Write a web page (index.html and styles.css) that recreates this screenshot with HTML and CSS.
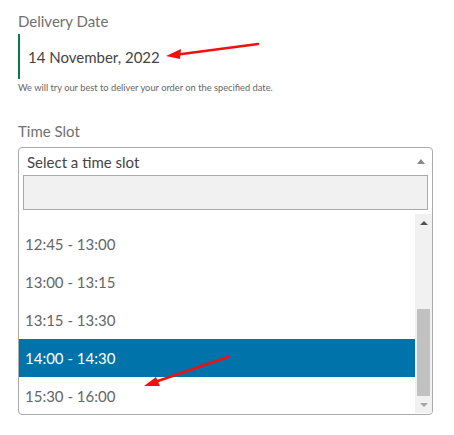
FILE: index.html
```html
<!DOCTYPE html>
<html>
<head>
<meta charset="utf-8">
<link rel="stylesheet" href="styles.css">
</head>
<body>
<div class="page">
  <div class="label first">Delivery Date</div>
  <div class="date-box"><span>14 November, 2022</span></div>
  <div class="hint">We will try our best to deliver your order on the specified date.</div>

  <div class="label second">Time Slot</div>
  <div class="select">
    <div class="select-head">
      <span>Select a time slot</span>
      <span class="caret-up"></span>
    </div>
    <div class="search-wrap"><div class="search"></div></div>
    <div class="list-wrap">
      <ul class="options">
        <li class="opt">12:45 - 13:00</li>
        <li class="opt">13:00 - 13:15</li>
        <li class="opt">13:15 - 13:30</li>
        <li class="opt active">14:00 - 14:30</li>
        <li class="opt">15:30 - 16:00</li>
      </ul>
      <div class="scrollbar">
        <div class="sb-btn"><span class="tri-up"></span></div>
        <div class="sb-track"><div class="sb-thumb"></div></div>
        <div class="sb-btn"><span class="tri-down"></span></div>
      </div>
    </div>
  </div>
</div>
<svg class="annot" width="454" height="435" viewBox="0 0 454 435">
  <line x1="258" y1="44" x2="178" y2="54.5" stroke="#f01010" stroke-width="2.5" stroke-linecap="round"/>
  <polygon points="166,56 181,49 180,59" fill="#f01010"/>
  <line x1="228" y1="357" x2="155" y2="382" stroke="#f01010" stroke-width="2.5" stroke-linecap="round"/>
  <polygon points="144,386 156,377 160,386" fill="#f01010"/>
</svg>
</body>
</html>
```

FILE: styles.css
```css
html, body {
  margin: 0;
  padding: 0;
  background: #ffffff;
}
body {
  font-family: Lato, "Open Sans", sans-serif;
  color: #555;
  position: relative;
  width: 454px;
  height: 435px;
  overflow: hidden;
}
.page {
  padding: 0 21px 0 18px;
}
.label {
  font-size: 15px;
  color: #707070;
  line-height: 20px;
}
.label.first {
  padding-top: 11px;
}
.date-box {
  margin-top: 3px;
  height: 45px;
  border-left: 2px solid #0b7a47;
  padding-left: 8px;
  display: flex;
  align-items: center;
  font-size: 15px;
  color: #444;
}
.date-box span {
  padding-top: 1px;
}
.hint {
  margin-top: 2px;
  font-size: 9.3px;
  line-height: 14px;
  color: #666;
}
.label.second {
  margin-top: 26px;
}
.select {
  margin-top: 6px;
  border: 1px solid #aaa;
  border-radius: 4px;
  background: #fff;
  height: 268px;
  box-sizing: border-box;
  overflow: hidden;
}
.select-head {
  height: 27px;
  display: flex;
  align-items: center;
  justify-content: space-between;
  padding: 0 8px 0 8px;
  font-size: 15px;
  color: #444;
}
.caret-up {
  width: 0;
  height: 0;
  border-left: 4px solid transparent;
  border-right: 4px solid transparent;
  border-bottom: 5px solid #888;
  margin-right: -1px;
}
.search-wrap {
  padding: 0 4px;
}
.search {
  height: 35px;
  box-sizing: border-box;
  border: 1px solid #aaa;
  background: #f1f1f1;
}
.list-wrap {
  margin-top: 4px;
  display: flex;
  height: 199px;
}
.options {
  list-style: none;
  margin: 0;
  padding: 11px 0 0 0;
  flex: 1;
  overflow: hidden;
}
.opt {
  height: 38px;
  line-height: 38px;
  padding-left: 6px;
  font-size: 15px;
  color: #666;
}
.opt.active {
  background: #0073aa;
  color: #fff;
}
.scrollbar {
  width: 17px;
  background: #f1f1f1;
  display: flex;
  flex-direction: column;
}
.sb-btn {
  height: 17px;
  display: flex;
  align-items: center;
  justify-content: center;
}
.tri-up {
  width: 0;
  height: 0;
  border-left: 4px solid transparent;
  border-right: 4px solid transparent;
  border-bottom: 4px solid #505050;
}
.tri-down {
  width: 0;
  height: 0;
  border-left: 4px solid transparent;
  border-right: 4px solid transparent;
  border-top: 4px solid #a3a3a3;
}
.sb-track {
  flex: 1;
  display: flex;
  flex-direction: column;
  justify-content: flex-end;
  padding: 0 2px;
}
.sb-thumb {
  height: 87px;
  background: #c1c1c1;
}
.annot {
  position: absolute;
  left: 0;
  top: 0;
  pointer-events: none;
}
```
